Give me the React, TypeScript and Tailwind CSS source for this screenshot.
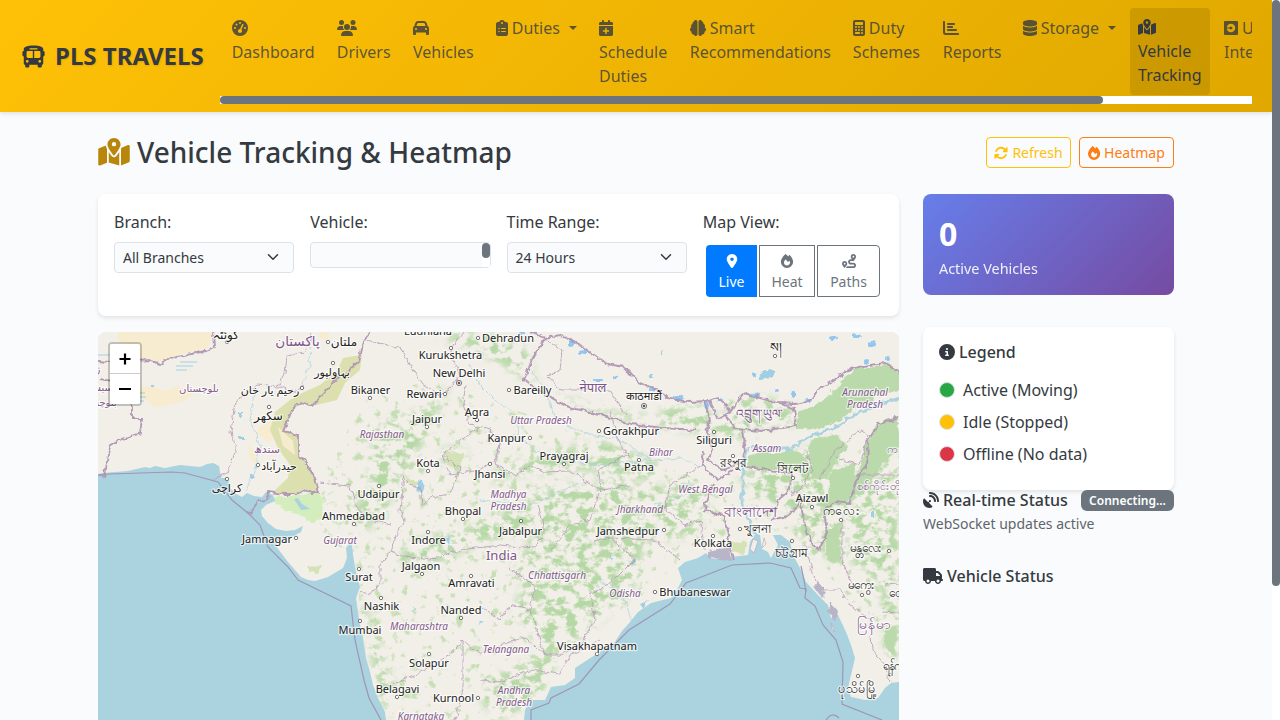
import React from "react";
import {
  FaBus, FaGaugeHigh, FaUsers, FaCar, FaClipboardList, FaCalendarPlus, FaBrain, FaCalculator,
  FaChartBar, FaDatabase, FaMapLocationDot, FaUber, FaRotate, FaFire, FaLocationDot, FaRoute,
  FaCircleInfo, FaSatelliteDish, FaTruck,
} from "react-icons/fa6";

type IconType = React.ComponentType<{ className?: string }>;

interface NavItem {
  icon: IconType;
  iconWidth: string;
  first?: string;
  rest?: string[];
  width: string;
  caret?: boolean;
  active?: boolean;
}

const navItems: NavItem[] = [
  { icon: FaGaugeHigh, iconWidth: "w-4", rest: ["Dashboard"], width: "w-[105.1px]" },
  { icon: FaUsers, iconWidth: "w-5", rest: ["Drivers"], width: "w-[76.2px]" },
  { icon: FaCar, iconWidth: "w-4", rest: ["Vehicles"], width: "w-[82.8px]" },
  { icon: FaClipboardList, iconWidth: "w-3", first: "Duties", width: "w-[103.2px]", caret: true },
  { icon: FaCalendarPlus, iconWidth: "w-3.5", rest: ["Schedule", "Duties"], width: "w-[90.8px]" },
  { icon: FaBrain, iconWidth: "w-4", first: "Smart", rest: ["Recommendations"], width: "w-[163.1px]" },
  { icon: FaCalculator, iconWidth: "w-3", first: "Duty", rest: ["Schemes"], width: "w-[90px]" },
  { icon: FaChartBar, iconWidth: "w-4", rest: ["Reports"], width: "w-[79.9px]" },
  { icon: FaDatabase, iconWidth: "w-3.5", first: "Storage", width: "w-[115.3px]", caret: true },
  { icon: FaMapLocationDot, iconWidth: "w-[18px]", rest: ["Vehicle", "Tracking"], width: "w-[80px]", active: true },
  { icon: FaUber, iconWidth: "w-3.5", first: "Uber", rest: ["Integration"], width: "w-[110px]" },
];

function NavLink({ item }: { item: NavItem }) {
  const Icon = item.icon;
  const tone = item.active
    ? "mr-[6px] h-[87px] rounded bg-black/10 pt-[7px] text-[#343a40]"
    : "h-[88px] pt-2 text-[#343a40]/80";
  return (
    <a className={`block shrink-0 whitespace-nowrap px-2 leading-6 ${item.width} ${tone}`}>
      <span className="flex h-6 items-center">
        <Icon className={`h-4 ${item.iconWidth}`} />
        {item.first && <span className="ml-1">{item.first}</span>}
        {item.caret && (
          <span className="ml-[9px] border-x-[4.8px] border-t-[4.8px] border-x-transparent border-t-current" />
        )}
      </span>
      {item.rest?.map((line) => (
        <span key={line} className="block">{line}</span>
      ))}
    </a>
  );
}

function Navbar() {
  return (
    <nav className="flex h-28 w-full items-center bg-[linear-gradient(135deg,#ffc107,#e0a800)] pl-[21px] shadow-[0_2px_4px_rgba(0,0,0,0.1)]">
      <div className="flex w-[199px] shrink-0 items-center text-2xl font-bold [text-shadow:1px_1px_2px_rgba(0,0,0,0.1)]">
        <FaBus className="mr-[9px] size-[25px]" />
        <span className="whitespace-nowrap">PLS TRAVELS</span>
      </div>
      <div className="w-[1032px] overflow-hidden">
        <div className="flex h-[88px] pl-[3.7px]">
          {navItems.map((item, i) => <NavLink key={i} item={item} />)}
        </div>
        <div className="h-2 bg-white">
          <div className="h-2 w-[883px] rounded bg-[#6c757d]" />
        </div>
      </div>
    </nav>
  );
}

function Select({ value }: { value: string }) {
  return (
    <div className="flex h-[31px] w-[180px] items-center justify-between rounded border border-[#dee2e6] bg-[#fafbfd] pr-3 pl-2 text-sm">
      {value}
      <svg viewBox="0 0 16 16" className="mb-px h-3 w-4" fill="none" stroke="#343a40" strokeWidth="2" strokeLinecap="round" strokeLinejoin="round">
        <path d="m2 5 6 6 6-6" />
      </svg>
    </div>
  );
}

function Filters() {
  return (
    <div className="flex h-[122px] rounded-lg bg-white p-4 shadow-[0_2px_4px_rgba(0,0,0,0.1)]">
      <div className="w-[196.25px]"><div className="mb-2">Branch:</div><Select value="All Branches" /></div>
      <div className="w-[196.25px]">
        <div className="mb-2">Vehicle:</div>
        <div className="flex h-[26px] w-[181px] justify-end rounded border border-[#dee2e6] bg-[#fafbfd]">
          <div className="w-2 bg-white"><div className="h-[15px] w-2 rounded bg-[#6c757d]" /></div>
        </div>
      </div>
      <div className="w-[196.25px]"><div className="mb-2">Time Range:</div><Select value="24 Hours" /></div>
      <div>
        <div className="mb-[11px]">Map View:</div>
        <div className="ml-[3.25px] flex gap-[2px] text-center text-sm text-[#6c757d]">
          <div className="flex h-[52px] w-[51px] flex-col items-center rounded-l bg-[#007bff] pt-[9px] text-white">
            <FaLocationDot /><span className="mt-1">Live</span>
          </div>
          <div className="flex h-[52px] w-14 flex-col items-center border border-[#6c757d] pt-2">
            <FaFire /><span className="mt-1">Heat</span>
          </div>
          <div className="flex h-[52px] w-[63px] flex-col items-center rounded-r border border-[#6c757d] pt-2">
            <FaRoute /><span className="mt-1">Paths</span>
          </div>
        </div>
      </div>
    </div>
  );
}

const seaWest =
  "M98 474 103 473 115 472 128 471 145 467 150 468 155 466 165 468 180 465 200 467 207 464 213 463 219 466 221 478 228 478 230 488 236 494 242 497 247 493 254 496 262 497 266 492 273 495 275 501 266 505 261 510 262 516 268 523 276 529 286 531 295 530 303 526 301 532 290 538 281 540 275 545 288 562 301 577 308 580 315 581 328 577 343 568 347 558 346 548 350 543 352 545 353 555 356 572 360 587 356 598 358 612 360 625 363 638 366 658 370 672 373 685 378 698 385 712 386 720H98Z";
const seaEast =
  "M524 720 525 710 530 700 545 700 551 687 565 685 575 678 575 668 595 655 615 642 622 631 630 622 638 612 651 603 671 598 678 588 682 580 678 568 685 562 698 558 706 553 710 558 728 560 731 557 748 555 750 542 756 533 760 535 762 549 768 552 771 558 778 545 773 535 781 535 790 542 793 555 800 568 806 582 818 595 828 605 831 618 838 615 846 632 851 645 855 658 851 675 848 688 851 697 865 700 878 698 885 688 891 683 899 682V720Z";

const forests = [
  "M798 413 811 407 822 401 835 389 848 376 857 367 870 368 889 364 899 373V390L884 394 868 402 852 409 840 421 824 427 797 428Z",
  "M747 455 761 452 779 452 792 449 806 457 810 464 800 465 790 469 766 471 746 466Z",
  "M813 440 835 434 848 448 836 460 827 480 811 478 812 464 806 456Z",
  "M831 470 856 464 855 480 848 502 838 505 827 500Z",
  "M864 449 873 430 884 421 899 417V450L888 458 877 468 863 493 851 499 849 486 858 472Z",
  "M826 528 840 528 841 560 829 562 826 550Z",
  "M885 628 895 628 894 655 886 648Z",
];
const speckled = [
  "M428 333 485 332 530 352 532 380 560 395 610 410 665 420 700 410 760 430 750 440 700 432 640 424 580 407 525 379 480 352Z",
  "M725 400 760 395 795 408 795 425 730 428Z",
  "M660 407 710 406 708 425 665 420Z",
  "M440 450 464 446 466 468 446 472Z",
  "M375 425 435 404 452 378 435 423 378 520 367 515Z",
  "M500 515 530 495 570 485 620 480 655 490 690 480 710 510 690 535 645 543 580 550 530 535 475 543 440 537Z",
  "M540 530 610 527 645 545 630 595 600 620 570 645 545 655 525 628 512 610 525 585 512 568Z",
  "M361 600 368 602 371 630 383 655 395 688 391 718 380 700 370 650Z",
  "M410 542 475 525 480 543 430 567 395 565Z",
  "M738 475 830 440 850 480 840 560 805 550 790 510 755 500Z",
  "M350 508 375 490 382 510 367 532Z",
  "M600 440 660 463 655 480 580 470 510 475 490 485 500 465Z",
  "M850 480 899 440 899 660 885 655 880 585 850 560Z",
  "M500 672 560 650 540 700 500 720 480 700Z",
];
const borders = [
  "M98 361 120 363 148 360 161 364 170 359 178 357 205 351 214 347 213 332",
  "M98 475 105 477 108 454 112 444 121 440 140 433 142 419 132 419 132 405 118 382 100 379",
  "M371 332 366 337 363 345 359 361 344 375 336 380 312 406 301 402 292 410 284 431 298 436 298 456 306 461 315 478 319 492 312 493 304 490 297 494 285 494 268 492 267 501 258 502 249 514",
  "M530 332 545 338 537 352 532 360 524 380 538 390 566 406 600 415 632 424 662 428 698 430",
  "M545 338 560 335 580 345 607 364 624 367 638 382 661 391 668 398 690 402 706 401 717 397 725 405 730 412 743 394 760 398 779 403 795 404 810 401 817 390 835 379 850 369 862 366 885 363 899 373",
  "M725 415 736 428 760 431 797 426 794 409 780 403M730 412 717 419 710 400",
  "M705 401 709 420 706 432 713 448 708 460 723 470 741 463 745 452 742 430M746 467 770 470 791 473 790 490 778 500 773 520 791 515 800 500 806 530 813 545 819 550M704 450 702 465 717 480 733 471M714 483 704 510 724 515 733 560",
  "M819 550 827 533 824 510 837 502 849 504 858 475 867 465 868 440 879 424 899 417",
];
const states = [
  "M366 340 400 348 410 365 423 385 440 396 452 385 460 375 450 352 463 332M466 385 463 402 470 425 490 430 501 440 495 460 480 470 450 475 442 455 475 430 480 427",
  "M442 455 460 468 450 495 430 498 422 505 420 488 408 483 404 475 400 510 405 520 395 535 391 552 400 555 430 560 460 550 500 545 535 548 545 530 538 505",
  "M501 440 495 465 515 475 530 465 545 472 570 471 585 480 600 490 590 520 570 525 552 550M610 410 617 437 627 455 598 470 602 490 630 485",
  "M391 552 380 565 380 582 370 595 360 590M508 568 535 585 530 610 545 655 526 638 500 645 480 655 463 640 450 655 420 673 393 685M530 610 510 605 500 620 480 605",
  "M593 542 610 538 635 560 620 575 590 595 595 620 580 645 560 655 545 655M610 538 653 540 680 560M702 465 670 485 665 510 685 525 700 520 705 550",
  "M600 640 570 655 560 674 530 670 500 682 480 680M463 640 463 690 455 720",
  "M312 332 305 352 287 356 285 373 278 386M304 386 294 392 280 387 257 385 235 402 231 432 236 448 228 472 212 480",
  "M319 483 350 486 357 508 370 520 391 525M545 338 562 350 560 370 547 376 560 390 610 390 625 414",
  "M805 545 815 580 825 590 840 590 850 605 870 620 872 650 885 665 890 682M842 520 842 560 855 590",
  "M805 450 812 470 800 490 790 495M820 480 835 450 860 430 868 435 860 465 836 458M882 612 899 613M885 585 899 584M857 475 899 475",
];
const maritime = [
  "M98 475 110 474 172 472 185 473 218 482 232 500 249 514 260 525 268 547 288 567 298 580 351 606 355 640 364 680 369 698 381 720",
  "M531 720 531 710 549 703 551 698 579 684 599 660 629 630 670 604 686 583 732 565 770 563 791 568 800 588 806 589 805 598 815 606 823 625 836 640 843 662 842 704 882 720",
  "M801 566 804 580 806 592M826 720Q832 711 839 718",
];
const rivers = [
  "M470 365 480 385 495 400 510 410 522 440 535 450 570 460 595 465 630 462 680 458 700 466",
  "M530 370 545 390 555 420 590 435 620 440 652 460",
  "M311 335 310 365 300 390M255 395 250 420 260 445 255 470 245 490",
  "M655 505 685 495 690 480M480 500 530 505 580 482M640 640 620 592 600 580",
];

type Label = [number, number, string, number?];
const cities: Label[] = [
  [226, 340, "کوئٹہ", 12], [344, 347, "ملتان", 12], [332, 377, "بہاولپور"], [270, 395, "رحیم یار خان"], [268.5, 420.5, "سکھر", 12],
  [279, 471, "حیدرآباد"], [227, 493, "کراچی"], [428, 336, "Ludhiana"], [508, 343, "Dehradun"], [450.5, 360, "Kurukshetra"],
  [459, 377.5, "New Delhi"], [370.5, 395, "Bikaner"], [424, 398.5, "Rewari"], [532.5, 395, "Bareilly"], [427, 423.5, "Jaipur"],
  [477, 416.5, "Agra"], [506.5, 443, "Kanpur"], [631, 435.5, "Gorakhpur"], [564, 460.5, "Prayagraj"], [428, 467.5, "Kota"],
  [490, 478.5, "Jhansi"], [639, 472, "Patna"], [378.5, 498.5, "Udaipur"], [463, 515.5, "Bhopal"], [353.5, 521, "Ahmedabad"],
  [520.5, 535.5, "Jabalpur"], [628, 535.5, "Jamshedpur"], [267, 543.5, "Jamnagar"], [428.5, 545, "Indore"], [421, 570.5, "Jalgaon"],
  [359, 582, "Surat"], [471.5, 588, "Amravati"], [381.5, 610.5, "Nashik"], [461, 615, "Nanded"], [360, 634.5, "Mumbai"],
  [429, 667.5, "Solapur"], [397.5, 694, "Belagavi"], [453.5, 702.5, "Kurnool"], [695, 597, "Bhubaneswar"],
  [597, 650.5, "Visakhapatnam"], [714, 445, "Siliguri"], [713, 547.5, "Kolkata"], [812, 503, "Aizawl"],
  [733, 468, "রংপুর", 12], [792.5, 474, "সিলেট", 12], [757, 533.5, "খুলনা", 12], [791, 558, "চট্টগ্রাম", 12], [644, 400.5, "काठमाडौं"],
  [776, 353, "ས།", 13], [841.5, 516, "ကလေး", 12.5], [866, 553, "မန္တလေး", 12], [861.5, 590, "မကွေး", 12], [911, 598, "တောင်ကြီး", 12],
  [896, 671, "ရန်ကုန်", 12], [858, 694, "ပုသိမ်မြို့", 12.5],
];
const regions: Label[] = [
  [382, 438, "Rajasthan"], [541, 424, "Uttar Pradesh"], [661, 456, "Bihar"], [767, 452, "Assam"], [865, 396, "Arunachal"],
  [865, 408, "Pradesh"], [705.5, 493, "West Bengal"], [508.5, 498, "Madhya"], [508.5, 510, "Pradesh"], [640, 513, "Jharkhand"],
  [340, 544, "Gujarat"], [557, 578.5, "Chhattisgarh"], [625, 597, "Odisha"], [419, 630, "Maharashtra"], [506, 653, "Telangana"],
  [514, 694, "Andhra"], [514, 706, "Pradesh"], [421, 720, "Karnataka"],
];
const uprightRegions: Label[] = [
  [267, 453, "سندھ", 11], [199, 392, "بلوچستان"], [98, 373, "ژ"], [96, 391, "سیستان"], [97, 406, "بلوچستان"],
  [903, 490, "စစ်ကိုင်းတိုင်းဒေသကြီး", 11], [899, 453, "ကချင်", 11],
];
const countries: Label[] = [
  [297.5, 346, "پاکستان", 13.5], [501.5, 560, "India", 13], [593, 392, "नेपाल", 13], [759, 418, "འབྲུག་ཡུལ་", 12],
  [750, 516.5, "বাংলাদেশ", 13.5], [874, 629, "မြန်မာ", 14],
];
const dots: [number, number][] = [
  [227, 342], [328, 342], [333, 363], [302, 388], [269, 407], [258, 465], [227, 479], [478, 338], [451, 348], [370, 398],
  [445, 394], [509, 390], [427, 427], [477, 420], [530, 438], [599, 431], [564, 464], [428, 471], [490, 464], [639, 460],
  [379, 486], [463, 519], [354, 524], [521, 521], [664, 530], [296, 538], [428, 532], [422, 574], [359, 569], [471, 576],
  [381, 598], [461, 618], [360, 621], [429, 654], [397, 697], [478, 698], [655, 592], [597, 654], [714, 432], [713, 536],
  [812, 507], [733, 456], [793, 478], [740, 529], [792, 541], [775, 356], [841, 520], [889, 551], [862, 595], [890, 675], [858, 676],
];
const lakes: [number, number, number, number][] = [
  [572, 343, 3, 4], [584, 352, 4, 2], [598, 380, 5, 2], [615, 377, 3, 2], [677, 398, 6, 3], [707, 405, 3, 4], [720, 400, 3, 2],
  [755, 395, 4, 2], [776, 390, 2, 2], [793, 394, 2, 3], [808, 401, 4, 2], [833, 338, 4, 2], [857, 336, 5, 2], [872, 344, 4, 3],
  [754, 375, 2, 2], [867, 361, 2, 2], [888, 358, 2, 2], [652, 389, 3, 2], [521, 333, 3, 2],
];

function LabelSet({ items, fill, size, italic }: { items: Label[]; fill: string; size: number; italic?: boolean }) {
  return (
    <g
      fill={fill} textAnchor="middle" stroke="#ffffff" strokeOpacity="0.65" strokeWidth="2.5" strokeLinejoin="round"
      paintOrder="stroke" fontStyle={italic ? "italic" : "normal"}
    >
      {items.map(([x, y, text, s], i) => (
        <text key={i} x={x} y={y} fontSize={s ?? size}>{text}</text>
      ))}
    </g>
  );
}

function MapView() {
  return (
    <div className="relative mt-4 h-[388px] overflow-hidden rounded-t-lg bg-[#f2efe9]">
      <svg viewBox="98 332 801 388" className="block h-[388px] w-[801px] font-['Noto_Sans','DejaVu_Sans',sans-serif]">
        <defs>
          <filter id="rough" x="-5%" y="-5%" width="110%" height="110%">
            <feTurbulence type="fractalNoise" baseFrequency="0.12" numOctaves="3" seed="4" />
            <feDisplacementMap in="SourceGraphic" scale="7" xChannelSelector="R" yChannelSelector="G" />
          </filter>
          <filter id="jag" filterUnits="userSpaceOnUse" x="98" y="332" width="801" height="388">
            <feTurbulence type="fractalNoise" baseFrequency="0.16" numOctaves="2" seed="9" />
            <feDisplacementMap in="SourceGraphic" scale="6" xChannelSelector="R" yChannelSelector="G" />
          </filter>
          <filter id="speckle" filterUnits="userSpaceOnUse" x="98" y="332" width="801" height="388" colorInterpolationFilters="sRGB">
            <feTurbulence type="fractalNoise" baseFrequency="0.09 0.12" numOctaves="5" seed="12" result="n" />
            <feColorMatrix in="n" type="matrix" values="0 0 0 0 0  0 0 0 0 0  0 0 0 0 0  6 0 0 0 -2.8" result="m" />
            <feGaussianBlur in="SourceGraphic" stdDeviation="5" result="s" />
            <feComposite in="s" in2="m" operator="in" />
          </filter>
          <filter id="sparse" filterUnits="userSpaceOnUse" x="98" y="332" width="801" height="388" colorInterpolationFilters="sRGB">
            <feTurbulence type="fractalNoise" baseFrequency="0.11" numOctaves="4" seed="31" result="n" />
            <feColorMatrix in="n" type="matrix" values="0 0 0 0 0  0 0 0 0 0  0 0 0 0 0  7 0 0 0 -4.2" result="m" />
            <feComposite in="SourceGraphic" in2="m" operator="in" />
          </filter>
        </defs>
        <rect x="98" y="332" width="801" height="388" fill="#f2efe9" />
        <g fill="#f7ecd0">
          <path d="M118 332H213L208 348 178 355 160 362 140 358 118 340Z" />
          <path d="M134 388 150 386 165 391 178 386 195 394 181 402 156 408 145 400Z" />
          <path d="M258 428 272 420 274 438 268 442 257 433ZM247 442 255 452 256 464 250 460ZM320 332H330L328 341 320 337Z" />
        </g>
        <path filter="url(#sparse)" fill="#c7dfb4" d="M365 400 430 380 600 440 700 480 800 480 899 430V670L850 600 790 530 700 540 650 590 550 660 500 720H395L365 650 355 560 320 530V480Z" />
        <g filter="url(#speckle)" fill="#b5d8a5">{speckled.map((d, i) => <path key={i} d={d} />)}</g>
        <g filter="url(#rough)" fill="#bbdaac">{forests.map((d, i) => <path key={i} d={d} />)}</g>
        <path fill="#dbe0ae" d="M362 355 354 356 343 358 337 371 320 385 304 392 290 400 275 412 270 430 278 448 290 465 288 478 276 489 273 493 285 495 297 494 304 490 312 493 319 492 315 478 306 461 298 456 298 436 284 431 292 410 301 402 312 406 337 400 345 383 360 370Z" />
        <path fill="#f6ebcd" d="m278 427 15 14 2 14-12-9Z" />
        <path filter="url(#rough)" fill="#d3edbd" d="M273 498 299 495 318 490 324 503 320 518 313 523 296 513 277 506Z" />
        <path filter="url(#rough)" fill="#d4e2b5" d="m306 566 15 1-3 7-9-1ZM732 541 746 543 744 555 732 553ZM446 451 464 454 458 467 446 466ZM405 477 420 483 417 488 406 482Z" />
        <g fill="#aad3df">
          <path d={seaWest} /><path d={seaEast} />
          <path d="M294 499 301 510 310 509 302 504 298 498Z" />
        </g>
        <g filter="url(#jag)" fill="#91c6f0">{lakes.map(([x, y, rx, ry], i) => <ellipse key={i} cx={x} cy={y} rx={rx} ry={ry} />)}</g>
        <path filter="url(#jag)" fill="#b9b5c8" d="M707 551 729 547 731 560 709 558ZM817 582 826 592 823 598 814 588ZM830 602 838 612 835 622 829 612Z" />
        <path fill="#f2efe9" stroke="#b6a3bd" strokeWidth=".6" d="M831 623 835 632 832 629ZM753 539 750 549 754 553 758 541ZM764 538 762 548 766 544Z" />
        <g fill="none" stroke="#aad3df" strokeWidth="1" opacity=".75" filter="url(#jag)">
          {rivers.map((d, i) => <path key={i} d={d} />)}
        </g>
        <g fill="none" stroke="#aad3df">
          <path strokeWidth="2.5" filter="url(#jag)" d="M751 448 790 449 812 436 840 425 853 415 875 406 899 398M748 448 743 465 743 490 742 505 755 535" />
          <path stroke="#9ed1e3" d="M180 362H197M176 366H193M176 370H187M135 393H145M137 397H146M137 401H144M98 355H110" />
        </g>
        <g filter="url(#jag)" fill="#9fcfe2">
          <path d="M240 412h3v5h-3zM239 437h5v3h-5zM250 475h4v3h-4zM152 385h2v3h-2zM419 478l6 7-4 8-5-3ZM445 540l5-3-1 9zM608 557l5 1-2 4zM759 375l10-6 7 3-5 5-11 2zM640 604l8-3-5 8zM413 608l5 1-3 3zM478 620l6 2-4 2zM632 559h4v3h-4zM871 512h3v5h-3zM650 373h3v6h-3zM661 350h2v5h-2z" />
        </g>
        <g fill="none" stroke="#b399b6" strokeWidth="1" opacity=".8" filter="url(#jag)">{states.map((d, i) => <path key={i} d={d} />)}</g>
        <g fill="none" stroke="#b096b3" strokeWidth="1.9" opacity=".95" filter="url(#jag)">{borders.map((d, i) => <path key={i} d={d} />)}</g>
        <g fill="none" stroke="#9d97b5" strokeWidth="1.2">{maritime.map((d, i) => <path key={i} d={d} />)}</g>
        <g fill="#fff" stroke="#555" strokeWidth=".8">
          {dots.map(([x, y], i) => <circle key={i} cx={x} cy={y} r="1.7" />)}
          <circle cx="459" cy="383" r="2.6" /><circle cx="644" cy="406" r="2.6" />
          <circle cx="459" cy="383" r="1" fill="#333" /><circle cx="644" cy="406" r="1" fill="#333" />
        </g>
        <LabelSet items={regions} fill="#855b8c" size={10} italic />
        <LabelSet items={uprightRegions} fill="#855b8c" size={10} />
        <LabelSet items={countries} fill="#80568a" size={13} />
        <g transform="translate(0 -0.6)"><LabelSet items={cities} fill="#222" size={11} /></g>
      </svg>
      <div className="absolute top-[10px] left-[10px] w-[34px] rounded border-2 border-black/20 bg-clip-padding text-black">
        <div className="flex h-[30px] items-center justify-center rounded-t-[2px] border-b border-[#ccc] bg-white">
          <svg viewBox="0 0 12 12" className="size-3"><path d="M6 0.5v11M0.5 6h11" stroke="currentColor" strokeWidth="2.2" /></svg>
        </div>
        <div className="flex h-[30px] items-center justify-center rounded-b-[2px] bg-white">
          <svg viewBox="0 0 12 12" className="size-3"><path d="M0 6h12" stroke="currentColor" strokeWidth="2.2" /></svg>
        </div>
      </div>
    </div>
  );
}

function LegendRow({ color, label }: { color: string; label: string }) {
  return (
    <div className="mb-2 flex h-6 items-center">
      <span className={`mr-2 size-4 rounded-full border border-[#dee2e6] ${color}`} />
      {label}
    </div>
  );
}

function Sidebar() {
  return (
    <aside className="w-[251px]">
      <div className="h-[101px] rounded-lg bg-[linear-gradient(135deg,#667eea,#764ba2)] px-4 pt-4 text-white">
        <div className="text-[32px] leading-[48px] font-bold">0</div>
        <div className="text-[14.4px] leading-[21px] opacity-90">Active Vehicles</div>
      </div>
      <div className="mt-8 h-[163px] rounded-lg bg-white px-4 pt-[15px] shadow-[0_2px_4px_rgba(0,0,0,0.1)]">
        <h6 className="mb-[17px] flex h-[19px] items-center gap-1 font-medium"><FaCircleInfo />Legend</h6>
        <div>
          <LegendRow color="bg-[#28a745]" label="Active (Moving)" />
          <LegendRow color="bg-[#ffc107]" label="Idle (Stopped)" />
          <LegendRow color="bg-[#dc3545]" label="Offline (No data)" />
        </div>
      </div>
      <div className="flex h-[21px] items-center justify-between">
        <h6 className="mb-[2px] flex items-center gap-1 font-medium"><FaSatelliteDish />Real-time Status</h6>
        <span className="flex h-[21px] w-[93px] items-center justify-center rounded-md bg-[#6c757d] text-xs font-semibold text-white">Connecting...</span>
      </div>
      <div className="mt-[2px] text-sm leading-[21px] text-[#5f656b]">WebSocket updates active</div>
      <h6 className="mt-8 flex h-5 items-center gap-1 font-medium"><FaTruck className="h-4 w-5" />Vehicle Status</h6>
    </aside>
  );
}

export default function App() {
  return (
    <div className="flex h-[720px] w-[1280px] overflow-hidden bg-[#fafbfd] font-['Noto_Sans',sans-serif] text-base leading-6 text-[#343a40]">
      <div className="w-[1272px]">
        <Navbar />
        <main className="px-[98px] pt-6">
          <header className="mb-[25px] flex h-[33px] items-center justify-between">
            <h2 className="mb-px flex items-center gap-[7px] text-[28px] leading-[34px] font-medium">
              <FaMapLocationDot className="h-7 w-8 text-[#b8860b]" />
              Vehicle Tracking &amp; Heatmap
            </h2>
            <div className="flex gap-2 text-sm">
              <button className="flex h-[31px] w-[85px] items-center justify-center gap-1 rounded border border-[#ffc107] text-[#ffc107]"><FaRotate />Refresh</button>
              <button className="flex h-[31px] w-[95px] items-center justify-center gap-[3.6px] rounded border border-[#fd7e14] text-[#fd7e14]"><FaFire className="h-[14px] w-[12.25px]" />Heatmap</button>
            </div>
          </header>
          <div className="flex gap-6">
            <div className="w-[801px]">
              <Filters />
              <MapView />
            </div>
            <Sidebar />
          </div>
        </main>
      </div>
      <div className="w-2 bg-white"><div className="h-[586px] rounded bg-[#6c757d]" /></div>
    </div>
  );
}
